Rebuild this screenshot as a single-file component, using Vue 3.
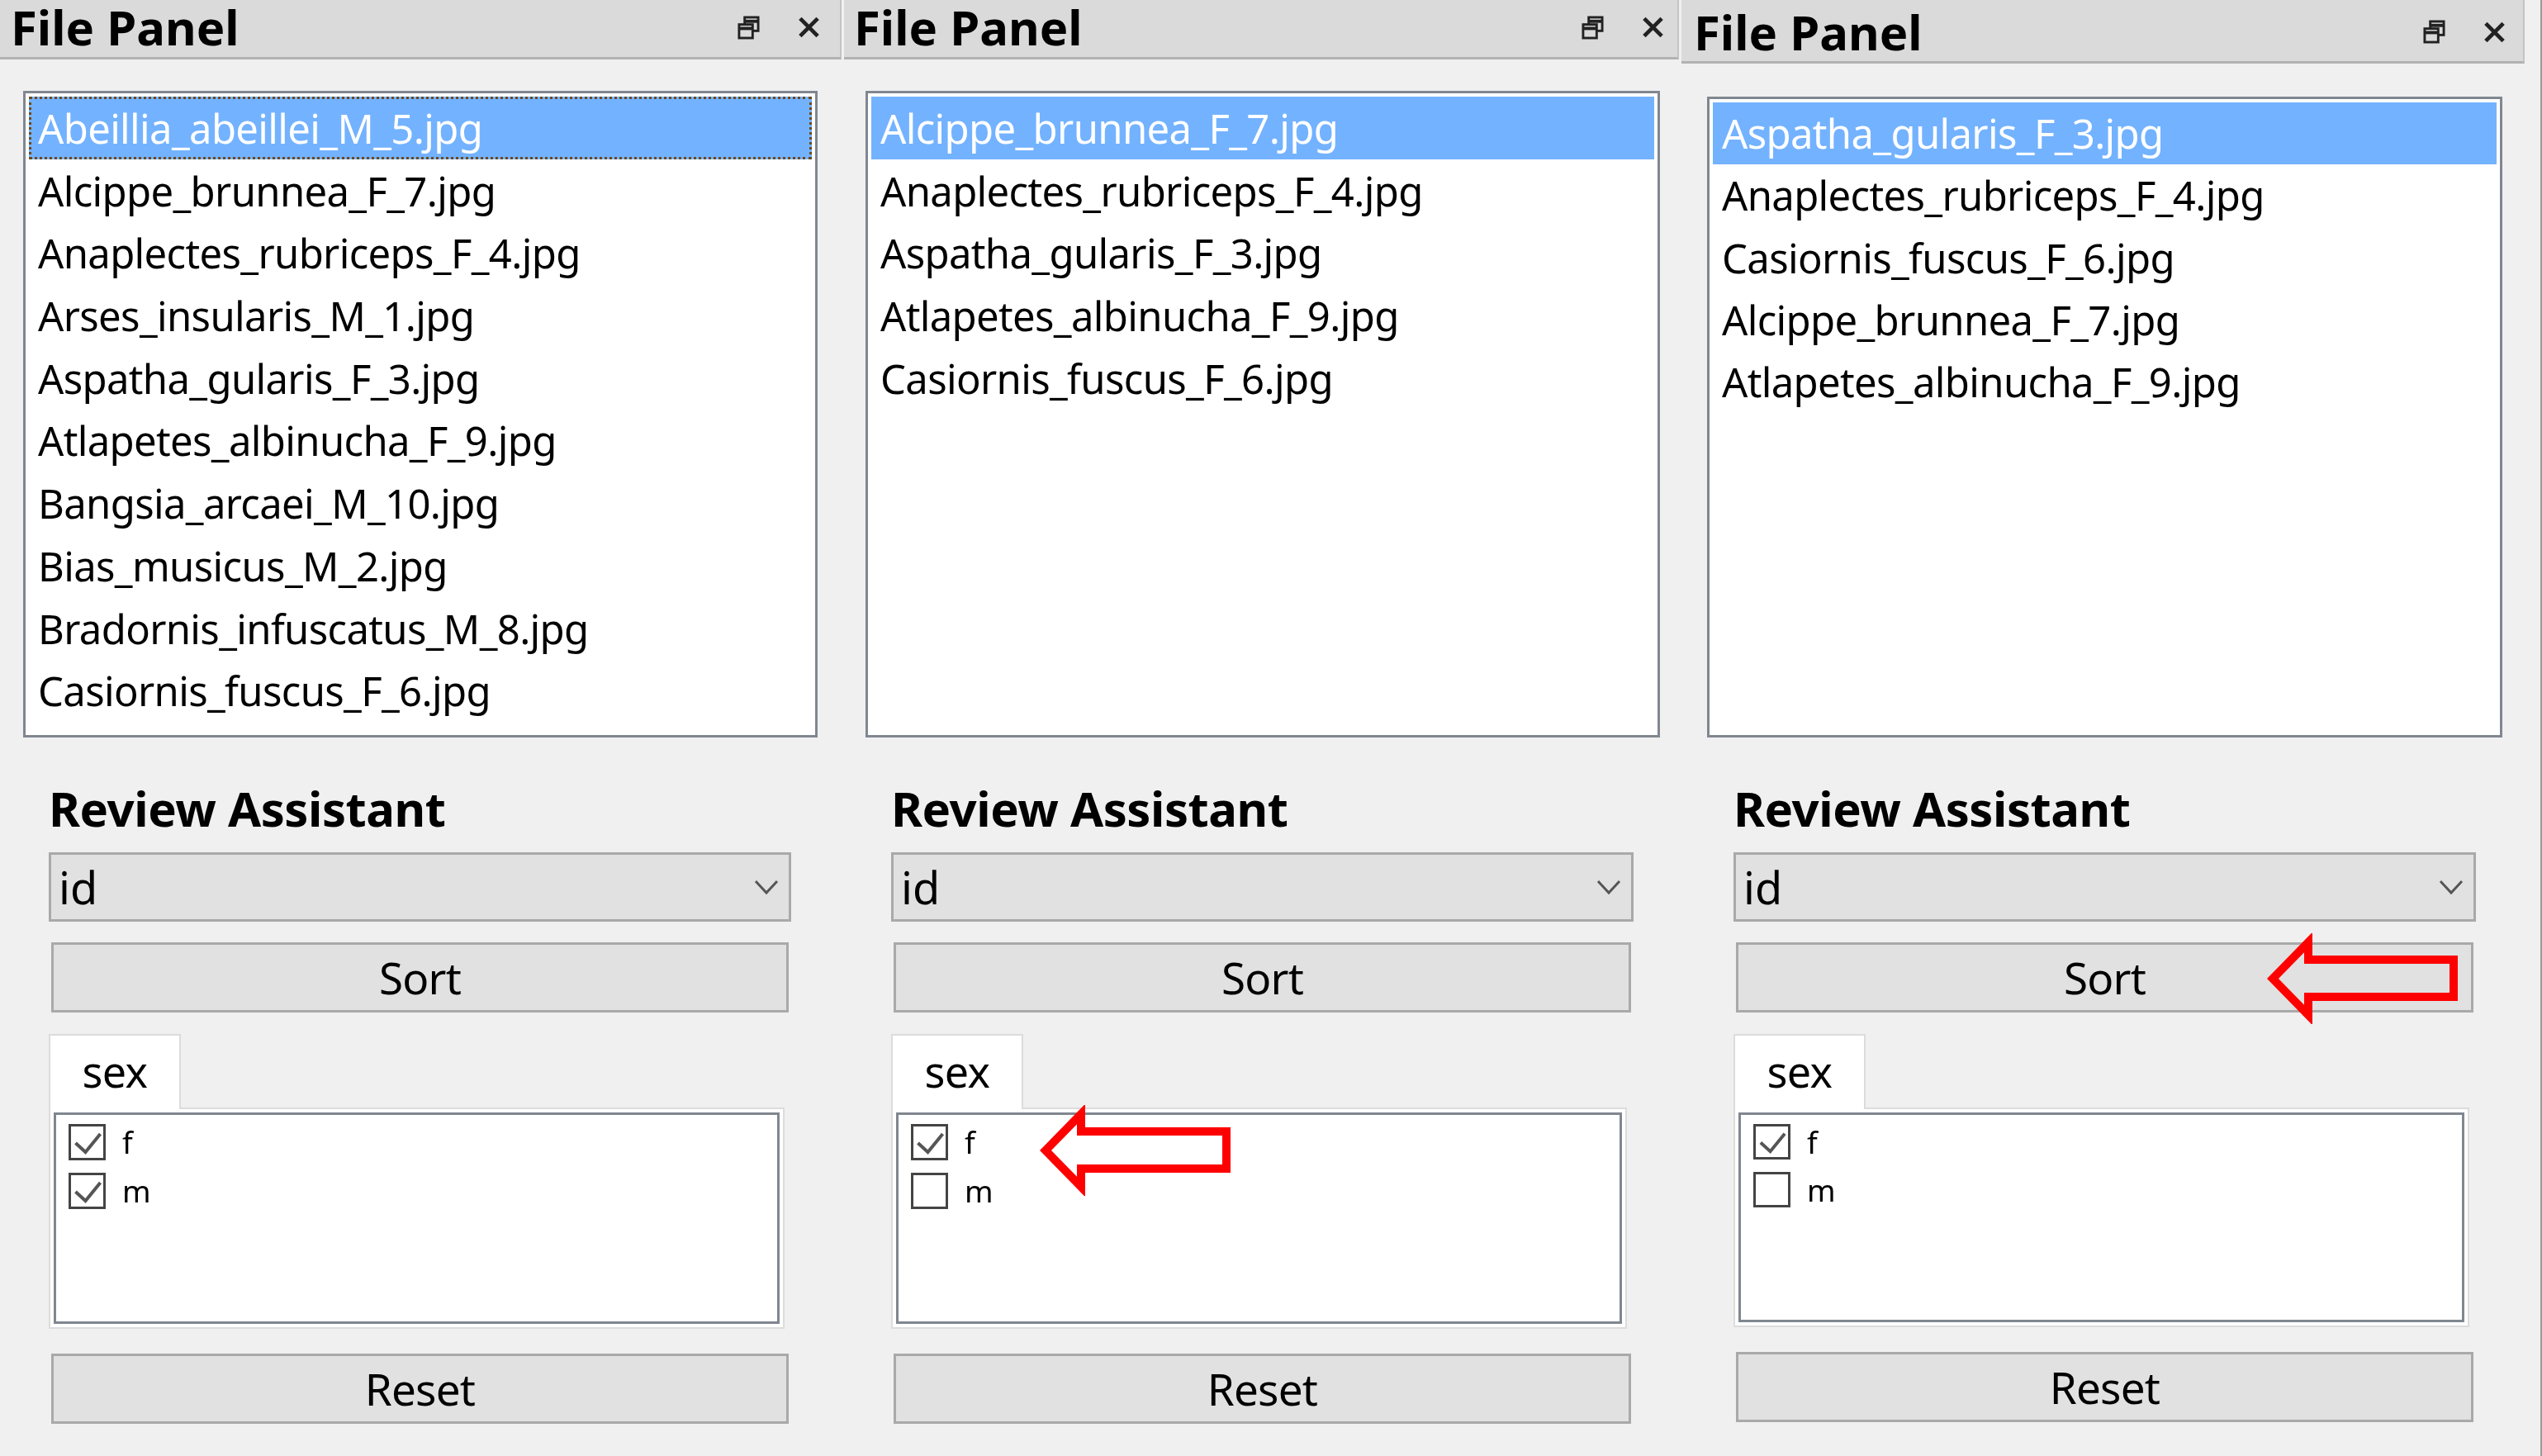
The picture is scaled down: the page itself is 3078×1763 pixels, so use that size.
<script setup>
const panels = [
  {
    id: 'one',
    selected: 0,
    focused: true,
    files: ['Abeillia_abeillei_M_5.jpg', 'Alcippe_brunnea_F_7.jpg', 'Anaplectes_rubriceps_F_4.jpg', 'Arses_insularis_M_1.jpg', 'Aspatha_gularis_F_3.jpg', 'Atlapetes_albinucha_F_9.jpg', 'Bangsia_arcaei_M_10.jpg', 'Bias_musicus_M_2.jpg', 'Bradornis_infuscatus_M_8.jpg', 'Casiornis_fuscus_F_6.jpg'],
    checks: [{ label: 'f', on: true }, { label: 'm', on: true }]
  },
  {
    id: 'two',
    selected: 0,
    files: ['Alcippe_brunnea_F_7.jpg', 'Anaplectes_rubriceps_F_4.jpg', 'Aspatha_gularis_F_3.jpg', 'Atlapetes_albinucha_F_9.jpg', 'Casiornis_fuscus_F_6.jpg'],
    checks: [{ label: 'f', on: true }, { label: 'm', on: false }]
  },
  {
    id: 'three',
    selected: 0,
    files: ['Aspatha_gularis_F_3.jpg', 'Anaplectes_rubriceps_F_4.jpg', 'Casiornis_fuscus_F_6.jpg', 'Alcippe_brunnea_F_7.jpg', 'Atlapetes_albinucha_F_9.jpg'],
    checks: [{ label: 'f', on: true }, { label: 'm', on: false }]
  }
]
</script>

<template>
  <div class="page">
    <section v-for="p in panels" :key="p.id" class="panel" :class="p.id">
      <header class="bar">
        <span class="bar-title">File Panel</span>
        <svg class="float-icon" viewBox="0 0 28 30" fill="none" stroke="#222" stroke-width="3">
          <rect x="9" y="2" width="17" height="17" />
          <path d="M9 7h17" stroke-width="4" />
          <rect x="2" y="11" width="17" height="17" fill="#dadada" />
          <path d="M2 16h17" stroke-width="4" />
        </svg>
        <svg class="close-icon" viewBox="0 0 28 28" fill="none" stroke="#222" stroke-width="5">
          <path d="M3 3 25 25M25 3 3 25" />
        </svg>
      </header>

      <ul class="list">
        <li v-for="(f, i) in p.files" :key="f" class="row" :class="{ sel: i === p.selected, focus: i === p.selected && p.focused }">{{ f }}</li>
      </ul>

      <div class="assistant">
        <h2 class="heading">Review Assistant</h2>
        <div class="combo">
          <span>id</span>
          <svg class="chev" viewBox="0 0 30 20" fill="none" stroke="#555" stroke-width="3"><path d="M2 3 15 17 28 3" /></svg>
        </div>
        <div class="btn sort">
          Sort
          <svg v-if="p.id === 'three'" class="arrow arrow-sort" viewBox="0 0 233 110" fill="none" stroke="#ff0000" stroke-width="10" stroke-miterlimit="10">
            <path d="M8 55 51 11V32H227V77H51V99Z" />
          </svg>
        </div>
        <div class="tab">sex</div>
        <div class="pane">
          <div class="checks">
            <label v-for="c in p.checks" :key="c.label" class="check">
              <span class="box">
                <svg v-if="c.on" viewBox="0 0 38 38" fill="none" stroke="#555" stroke-width="4"><path d="M5 20 17 31 35 9" /></svg>
              </span>
              <span class="check-label">{{ c.label }}</span>
            </label>
          </div>
          <svg v-if="p.id === 'two'" class="arrow arrow-f" viewBox="0 0 233 110" fill="none" stroke="#ff0000" stroke-width="10" stroke-miterlimit="10">
            <path d="M8 55 51 11V32H227V77H51V99Z" />
          </svg>
        </div>
        <div class="btn reset">Reset</div>
      </div>
    </section>
  </div>
</template>

<style>
html, body { margin: 0; background: #f0f0f0; }
</style>

<style scoped>
.page {
  display: flex;
  width: 3078px;
  height: 1763px;
  overflow: hidden;
  background: #f0f0f0;
  color: #000;
  font-family: "Noto Sans", "Open Sans", sans-serif;
  box-sizing: border-box;
  border-right: 2px solid #9a9a9a;
  filter: blur(0.5px);
}
.panel { display: flex; flex-direction: column; box-sizing: border-box; flex: none; }
.one { width: 1022px; }
.two { width: 1014px; }
.three { width: 1040px; }

.bar {
  display: flex;
  align-items: center;
  height: 72px;
  box-sizing: border-box;
  background: #dadada;
  border-bottom: 3px solid #b2b2b2;
  border-right: 2px solid #c4c4c4;
  padding: 0 24px 3px 13px;
  margin-right: 3px;
}
.two .bar { padding: 0 16px 3px 12px; }
.three .bar { height: 77px; padding: 3px 21px 0 15px; margin-right: 19px; }
.bar-title { font-size: 58px; font-weight: 700; flex: 1; line-height: 66px; }
.float-icon { width: 27px; height: 31px; margin-right: 46px; }
.close-icon { width: 27px; height: 28px; }

.list {
  list-style: none;
  margin: 38px 0 0 28px;
  width: 962px;
  height: 783px;
  box-sizing: border-box;
  padding: 4px;
  background: #fff;
  border: 3px solid #808790;
}
.two .list { margin-left: 26px; }
.three .list { margin: 40px 0 0 31px; width: 963px; height: 776px; }
.row {
  height: 75.7px;
  line-height: 76px;
  padding-left: 11px;
  font-size: 49px;
  letter-spacing: -0.65px;
  white-space: nowrap;
}
.three .row { height: 75.3px; line-height: 75px; }
.row.sel { background: #73b2ff; color: #fff; }
.row.focus { outline: 3px dotted #6b4a20; outline-offset: -3px; }

.assistant { display: flex; flex-direction: column; margin-left: 59px; width: 899px; }
.two .assistant { margin-left: 57px; }
.three .assistant { margin-left: 63px; }
.heading {
  margin: 50px 0 0;
  height: 89px;
  line-height: 72px;
  font-size: 58px;
  font-weight: 700;
  letter-spacing: -0.45px;
}
.combo {
  display: flex;
  align-items: center;
  justify-content: space-between;
  height: 84px;
  box-sizing: border-box;
  background: #e1e1e1;
  border: 3px solid #a9a9a9;
  padding: 0 12px 0 9px;
  font-size: 54px;
}
.chev { width: 30px; height: 20px; }
.btn {
  position: relative;
  display: flex;
  align-items: center;
  justify-content: center;
  height: 85px;
  margin: 25px 3px 0;
  box-sizing: border-box;
  background: #e1e1e1;
  border: 3px solid #a9a9a9;
  font-size: 53px;
  letter-spacing: -0.8px;
}
.tab {
  margin-top: 26px;
  width: 160px;
  height: 91px;
  box-sizing: border-box;
  background: #fff;
  border: 2px solid #dcdcdc;
  border-bottom: none;
  text-align: center;
  line-height: 86px;
  font-size: 52px;
  letter-spacing: -0.5px;
  position: relative;
  z-index: 1;
}
.pane {
  position: relative;
  width: 891px;
  height: 268px;
  box-sizing: border-box;
  padding: 4px;
  background: #fff;
  border: 2px solid #dcdcdc;
  margin-top: -2px;
}
.three .pane { height: 266px; }
.checks {
  height: 100%;
  box-sizing: border-box;
  border: 3px solid #808790;
  padding: 11px 0 0 15px;
  display: flex;
  flex-direction: column;
  gap: 15px;
}
.check { display: flex; align-items: center; height: 44px; }
.three .check { height: 43px; }
.box {
  width: 45px;
  height: 100%;
  box-sizing: border-box;
  border: 3px solid #444;
  flex: none;
}
.box svg { display: block; width: 100%; height: 100%; }
.check-label { margin-left: 20px; font-size: 37px; line-height: 44px; }
.reset { margin-top: 30px; }

.arrow { position: absolute; width: 233px; height: 110px; z-index: 2; }
.arrow-sort { right: 15px; top: -14px; }
.arrow-f { left: 177px; top: -5px; }
</style>
